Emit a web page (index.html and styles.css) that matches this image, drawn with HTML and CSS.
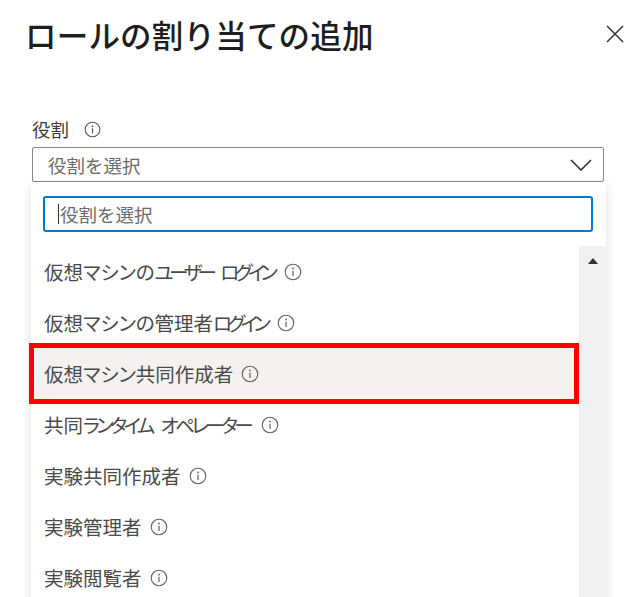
FILE: index.html
```html
<!DOCTYPE html>
<html lang="ja">
<head>
  <meta charset="UTF-8">
  <meta name="viewport" content="width=device-width, initial-scale=1.0">
  <title>ロールの割り当ての追加</title>
  <link rel="stylesheet" href="styles.css">
</head>
<body>
  <div class="dialog">
    <header class="dialog-header">
      <h1 class="dialog-title">ロールの割り当ての追加</h1>
      <button class="close-btn" aria-label="閉じる">
        <svg width="20" height="20" viewBox="0 0 20 20">
          <path d="M2 2 L18 18 M18 2 L2 18" stroke="#333" stroke-width="1.5" fill="none"/>
        </svg>
      </button>
    </header>

    <div class="field">
      <label class="field-label">役割
        <svg class="info" width="17" height="17" viewBox="0 0 16 16">
          <circle cx="8" cy="8" r="6.9" stroke="#555" stroke-width="1" fill="none"/>
          <circle cx="8" cy="4.9" r="0.8" fill="#555"/>
          <path d="M8 6.8 V11.6" stroke="#555" stroke-width="1.1"/>
        </svg>
      </label>

      <div class="select">
        <span class="select-text">役割を選択</span>
        <svg width="22" height="12" viewBox="0 0 22 12">
          <path d="M1 1 L11 11 L21 1" stroke="#333" stroke-width="1.6" fill="none"/>
        </svg>
      </div>

      <div class="dropdown">
        <div class="search">
          <span class="caret"></span>
          <span class="search-text">役割を選択</span>
        </div>
        <div class="dropdown-body">
          <ul class="options">
            <li class="option"><span>仮想マシンの<span class="kana">ユーザー ログイン</span></span><svg class="info" width="18" height="18" viewBox="0 0 16 16"><circle cx="8" cy="8" r="6.9" stroke="#666" stroke-width="1" fill="none"/><circle cx="8" cy="4.9" r="0.8" fill="#666"/><path d="M8 6.8 V11.6" stroke="#666" stroke-width="1.1"/></svg></li>
            <li class="option"><span>仮想マシンの管理者<span class="kana">ログイン</span></span><svg class="info" width="18" height="18" viewBox="0 0 16 16"><circle cx="8" cy="8" r="6.9" stroke="#666" stroke-width="1" fill="none"/><circle cx="8" cy="4.9" r="0.8" fill="#666"/><path d="M8 6.8 V11.6" stroke="#666" stroke-width="1.1"/></svg></li>
            <li class="option selected"><span>仮想マシン共同作成者</span><svg class="info" width="18" height="18" viewBox="0 0 16 16"><circle cx="8" cy="8" r="6.9" stroke="#666" stroke-width="1" fill="none"/><circle cx="8" cy="4.9" r="0.8" fill="#666"/><path d="M8 6.8 V11.6" stroke="#666" stroke-width="1.1"/></svg></li>
            <li class="option"><span>共同<span class="kana narrow">ランタイム オペレーター</span></span><svg class="info" width="18" height="18" viewBox="0 0 16 16"><circle cx="8" cy="8" r="6.9" stroke="#666" stroke-width="1" fill="none"/><circle cx="8" cy="4.9" r="0.8" fill="#666"/><path d="M8 6.8 V11.6" stroke="#666" stroke-width="1.1"/></svg></li>
            <li class="option"><span>実験共同作成者</span><svg class="info" width="18" height="18" viewBox="0 0 16 16"><circle cx="8" cy="8" r="6.9" stroke="#666" stroke-width="1" fill="none"/><circle cx="8" cy="4.9" r="0.8" fill="#666"/><path d="M8 6.8 V11.6" stroke="#666" stroke-width="1.1"/></svg></li>
            <li class="option"><span>実験管理者</span><svg class="info" width="18" height="18" viewBox="0 0 16 16"><circle cx="8" cy="8" r="6.9" stroke="#666" stroke-width="1" fill="none"/><circle cx="8" cy="4.9" r="0.8" fill="#666"/><path d="M8 6.8 V11.6" stroke="#666" stroke-width="1.1"/></svg></li>
            <li class="option"><span>実験閲覧者</span><svg class="info" width="18" height="18" viewBox="0 0 16 16"><circle cx="8" cy="8" r="6.9" stroke="#666" stroke-width="1" fill="none"/><circle cx="8" cy="4.9" r="0.8" fill="#666"/><path d="M8 6.8 V11.6" stroke="#666" stroke-width="1.1"/></svg></li>
          </ul>
          <div class="scrollbar"><span class="scroll-up"></span></div>
        </div>
      </div>
    </div>
  </div>
</body>
</html>
```

FILE: styles.css
```css
body {
  margin: 0;
  background: #fff;
  font-family: "Noto Sans CJK JP", "Noto Sans", sans-serif;
  color: #333;
  height: 597px;
  overflow: hidden;
}

.dialog {
  display: flex;
  flex-direction: column;
}

.dialog-header {
  display: flex;
  justify-content: space-between;
  align-items: center;
  padding: 14px 8px 0 25px;
}

.dialog-title {
  margin: 0;
  font-size: 31.5px;
  line-height: 40px;
  font-weight: 500;
  color: #1e1e1e;
  letter-spacing: 0.2px;
}

.close-btn {
  width: 20px;
  height: 20px;
  padding: 0;
  border: none;
  background: none;
  display: flex;
}

.field {
  display: flex;
  flex-direction: column;
  padding: 0 29px 0 32px;
  margin-top: 63px;
}

.field-label {
  display: flex;
  align-items: center;
  gap: 15px;
  font-size: 18.5px;
  line-height: 24px;
  color: #3b3b3b;
  margin-bottom: 6px;
}

.select {
  height: 35px;
  box-sizing: border-box;
  border: 1px solid #8a8886;
  border-radius: 2px;
  display: flex;
  align-items: center;
  justify-content: space-between;
  padding: 0 11px 0 15px;
}

.select-text,
.search-text {
  font-size: 18.5px;
  color: #6b6b6b;
}

.dropdown {
  margin: 0 -2px 0 -1px;
  padding-top: 14px;
  background: #fff;
  box-shadow: 0 4px 10px rgba(0, 0, 0, 0.14);
}

.search {
  height: 36px;
  box-sizing: border-box;
  margin: 0 13px 14px 12px;
  border: 2px solid #0078d4;
  border-radius: 3px;
  display: flex;
  align-items: center;
  padding-left: 13px;
}

.caret {
  width: 1px;
  height: 20px;
  background: #333;
  margin-right: 1px;
}

.dropdown-body {
  display: flex;
  height: 360px;
}

.options {
  flex: 1;
  list-style: none;
  margin: 0;
  padding: 0;
}

.option {
  height: 51px;
  display: flex;
  align-items: center;
  gap: 8px;
  padding-left: 13px;
  font-size: 19.5px;
  color: #4a4a4a;
  font-feature-settings: "palt";
}

/* katakana is narrower in the original UI font */
.kana {
  letter-spacing: -4.5px;
  word-spacing: 8px;
  padding-right: 3px;
}

.kana.narrow {
  letter-spacing: -3.5px;
}

.option.selected {
  position: relative;
  background: #f3f2f1;
}

.option.selected::after {
  content: "";
  position: absolute;
  top: -5px;
  bottom: -5px;
  left: -2px;
  right: 0;
  border: 5px solid #ff0000;
}

.scrollbar {
  width: 27px;
  background: #f0f0f0;
  display: flex;
  justify-content: center;
  padding-top: 12px;
  box-sizing: border-box;
}

.scroll-up {
  width: 0;
  height: 0;
  border-left: 5px solid transparent;
  border-right: 5px solid transparent;
  border-bottom: 6px solid #333;
}
```
